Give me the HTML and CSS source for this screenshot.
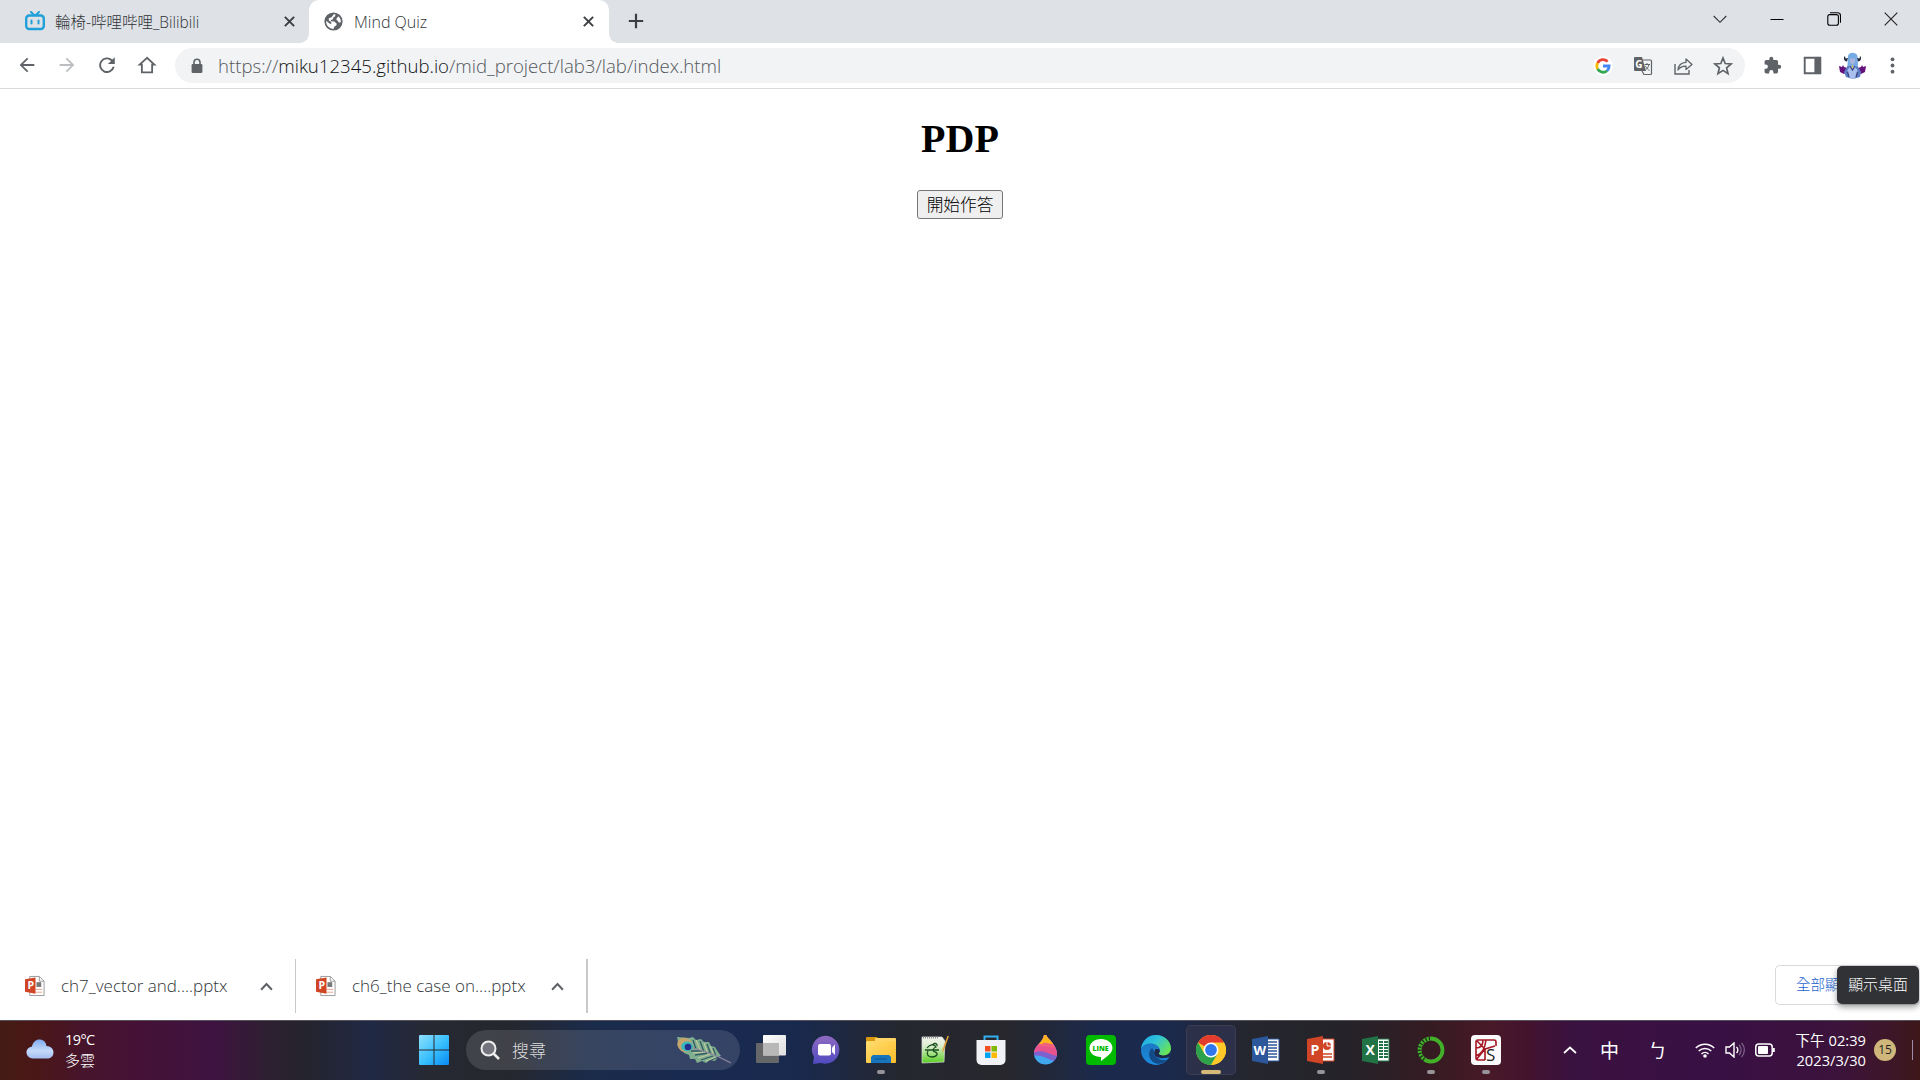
FILE: index.html
```html
<!DOCTYPE html>
<html lang="zh-Hant">
<head>
<meta charset="utf-8">
<title>Mind Quiz</title>
<link rel="stylesheet" href="styles.css">
</head>
<body>
<div class="screen">
  <header class="tabstrip">
    <div class="tab tab-first">
      <svg class="favicon" viewBox="0 0 20 20"><path d="M6 1l3 3M14 1l-3 3" stroke="#20a0d8" stroke-width="2" stroke-linecap="round"/><rect x="1.2" y="4.5" width="17.6" height="13.5" rx="3" fill="#dee1e6" stroke="#20a0d8" stroke-width="2.4"/><path d="M6.5 9.5v3M13.5 9.5v3" stroke="#20a0d8" stroke-width="2" stroke-linecap="round"/></svg>
      <span class="tab-title t-bili">輪椅-哔哩哔哩_Bilibili</span>
      <svg class="close" viewBox="0 0 10 10"><path d="M.8.8l8.4 8.4M9.2.8L.8 9.2" stroke="#3c4043" stroke-width="1.8"/></svg>
    </div>
    <div class="tab tab-active">
      <svg class="favicon globe" viewBox="0 0 20 20"><circle cx="10" cy="10" r="9.6" fill="#5f6368"/><path d="M10.500 2.200l1.500.3-.2 2-2 1.200-.4 1.800-2.200.8.200 1.500 3.500.2 2.500 2.300-.5 2-2.200 1.200-.7 2.500A8 8 0 0 1 2.200 9.300l4.300 3.400 1.300-.7-.3-1.700-2.300-1.100L5 6.500 8 5.400z" fill="#fff"/><path d="M15.300 4.600a8 8 0 0 1 2.500 6l-1.900.8-1.500-2.300-1.400-.9.500-1.800z" fill="#fff"/></svg>
      <span class="tab-title t-quiz">Mind Quiz</span>
      <svg class="close" viewBox="0 0 10 10"><path d="M.8.8l8.4 8.4M9.2.8L.8 9.2" stroke="#3c4043" stroke-width="1.8"/></svg>
    </div>
    <svg class="newtab" viewBox="0 0 16 16"><path d="M8 .8v14.4M.8 8h14.4" stroke="#3c4043" stroke-width="2.2"/></svg>
    <div class="window-controls">
      <svg viewBox="0 0 14 14"><path d="M.7 4L7 10.3 13.3 4" fill="none" stroke="#333" stroke-width="1.1"/></svg>
      <svg viewBox="0 0 14 14"><path d="M.5 7.500h13" stroke="#000"/></svg>
      <svg viewBox="0 0 14 14"><rect x=".8" y="2.6" width="10.6" height="10.6" rx="2" fill="none" stroke="#000" stroke-width="1.1"/><path d="M3 .7h7.5a3 3 0 0 1 3 3v7" fill="none" stroke="#000" stroke-width="1.1"/></svg>
      <svg viewBox="0 0 14 14"><path d="M.7.7l12.6 12.6M13.3.7L.7 13.3" stroke="#222" stroke-width="1.1"/></svg>
    </div>
  </header>

  <nav class="toolbar">
    <div class="nav-buttons">
      <svg viewBox="0 0 24 24"><path d="M20 11H7.8l5.6-5.6L12 4l-8 8 8 8 1.4-1.4L7.8 13H20z" fill="#5f6368"/></svg>
      <svg viewBox="0 0 24 24"><path d="M4 11h12.2l-5.6-5.6L12 4l8 8-8 8-1.4-1.4 5.6-5.6H4z" fill="#bcbec1"/></svg>
      <svg viewBox="0 0 24 24"><path d="M17.900 6.100A8.500 8.500 0 1 0 20.300 14h-2.200A6.400 6.400 0 1 1 16.400 7.600L13 11h7.500V3.500z" fill="#5f6368"/></svg>
      <svg viewBox="0 0 24 24"><path d="M12 4.200L4 11.600h2.400V20h11.200v-8.400H20z" fill="none" stroke="#5f6368" stroke-width="2"/></svg>
    </div>
    <div class="omnibox">
      <svg class="lock" viewBox="0 0 12 16"><path d="M3 7V4.3a3 3 0 0 1 6 0V7" fill="none" stroke="#5f6368" stroke-width="1.6"/><rect x=".6" y="6" width="10.8" height="9" rx="1.2" fill="#5f6368"/></svg>
      <span class="url">https://<b>miku12345.github.io</b>/mid_project/lab3/lab/index.html</span>
      <div class="box-icons">
        <svg viewBox="0 0 20 20"><circle cx="10" cy="10" r="9.800" fill="#fff"/><g fill="none" stroke-width="2.800"><path d="M14.600 5.600A6.200 6.200 0 0 0 4.600 7" stroke="#ea4335"/><path d="M4.600 7a6.200 6.200 0 0 0 0 6" stroke="#fbbc05"/><path d="M4.600 13a6.200 6.200 0 0 0 9.500 1.700" stroke="#34a853"/><path d="M14.100 14.700A6 6 0 0 0 16.100 10H10" stroke="#4285f4"/></g></svg>
        <svg viewBox="0 0 20 20"><path d="M8 4h9.500a1 1 0 0 1 1 1v12.500a1 1 0 0 1-1 1H11l-2-3.500" fill="#f1f3f4" stroke="#5f6368" stroke-width="1.200"/><path d="M2 1h7l4 14H2a1 1 0 0 1-1-1V2a1 1 0 0 1 1-1z" fill="#5f6368"/><text x="2.300" y="11.500" class="glyph-g">G</text><path d="M11.500 8.500H17M14 7v1.500M16 8.500c-.5 2.500-2 4.500-3.500 5.500M12.500 10c1 2 2.500 3.500 4 4.500" stroke="#5f6368" fill="none"/></svg>
        <svg viewBox="0 0 20 20"><path d="M2 8v10h14v-4" fill="none" stroke="#5f6368" stroke-width="1.400"/><path d="M5 14c.4-5 3-7.500 8-7.700V3l6 5.400-6 5.100v-3.300c-3.600-.1-6 .9-8 3.800z" fill="none" stroke="#5f6368" stroke-width="1.300" stroke-linejoin="round"/></svg>
        <svg viewBox="0 0 20 20"><path d="M10 2l2.200 5.500 6 .5-4.600 3.800L15 17.600 10 14.400 5 17.600l1.400-5.800L1.800 8l6-.5z" fill="none" stroke="#5f6368" stroke-width="1.700"/></svg>
      </div>
    </div>
    <div class="chrome-icons">
      <svg viewBox="0 0 24 24"><path d="M20.500 11H19V7a2 2 0 0 0-2-2h-4V3.500a2.500 2.500 0 0 0-5 0V5H4a2 2 0 0 0-2 2v3.800h1.500a2.700 2.700 0 0 1 0 5.400H2V20a2 2 0 0 0 2 2h3.800v-1.500a2.700 2.700 0 0 1 5.400 0V22H17a2 2 0 0 0 2-2v-4h1.500a2.500 2.500 0 0 0 0-5z" fill="#5f6368"/></svg>
      <svg viewBox="0 0 20 20"><path d="M1.800 1.800h16.400v16.400H1.800z" fill="#fff" stroke="#5f6368" stroke-width="2"/><path d="M12 1h7v18h-7z" fill="#5f6368"/></svg>
      <svg class="avatar" viewBox="0 0 27 27"><path d="M0 14l3 1 1-2 1 2 3 1 1 3-4 3-4-2zM27 14l-3 1-1-2-1 2-3 1-1 3 4 3 4-2z" fill="#65117c"/><path d="M9.500 12L5 20l2 5 5 1.500h4L21 25l1-5-4.500-8z" fill="#5c7cc4"/><path d="M13.500 12l-5 6 1 7 4 1.500 4-1.500 1-7z" fill="#a8bff0"/><path d="M9 4C10-.3 17-.3 18.500 4L19 13l-2 2H10.500L8.500 13z" fill="#75aae5"/><path d="M11 6.500h5v4L13.500 12.500 11 10.500z" fill="#a9b5dc"/><path d="M8 9.500C4 9 4.500 5 6 4l.5 2.500L9 6zM19 9.500c4-.5 3.500-4.500 2-5.500l-.5 2.500L18 6z" fill="#252a44"/><path d="M11 14l2.500 4 2.500-4M8.500 20l1.500 5M18.500 20L17 25" fill="none" stroke="#35407d" stroke-width="1.200"/><path d="M13.500 13v3" stroke="#d9b96a" stroke-width="1.500"/></svg>
      <svg viewBox="0 0 20 20"><g fill="#5f6368"><circle cx="10" cy="3.500" r="2"/><circle cx="10" cy="10" r="2"/><circle cx="10" cy="16.500" r="2"/></g></svg>
    </div>
  </nav>

  <main class="page">
    <h1>PDP</h1>
    <button class="start">開始作答</button>
  </main>

  <section class="downloads">
    <div class="download">
      <svg class="ppt-file" viewBox="0 0 22 22"><path d="M5 1h10l5 5v15H5z" fill="#fff" stroke="#999"/><path d="M15 1v5h5" fill="none" stroke="#999"/><path d="M12 7h5v5h-5z" fill="#777"/><path d="M11 14.500h7M11 17.500h7" stroke="#e5a58f"/><path d="M0 4l11-2v17L0 17z" fill="#d04525"/><text x="2.500" y="14" class="office-small">P</text></svg>
      <span class="file-a">ch7_vector and....pptx</span>
      <svg class="caret" viewBox="0 0 12 8"><path d="M1 7l5-5.300L11 7" fill="none" stroke="#5f6368" stroke-width="1.900"/></svg>
    </div>
    <div class="download last">
      <svg class="ppt-file" viewBox="0 0 22 22"><path d="M5 1h10l5 5v15H5z" fill="#fff" stroke="#999"/><path d="M15 1v5h5" fill="none" stroke="#999"/><path d="M12 7h5v5h-5z" fill="#777"/><path d="M11 14.500h7M11 17.500h7" stroke="#e5a58f"/><path d="M0 4l11-2v17L0 17z" fill="#d04525"/><text x="2.500" y="14" class="office-small">P</text></svg>
      <span class="file-b">ch6_the case on....pptx</span>
      <svg class="caret" viewBox="0 0 12 8"><path d="M1 7l5-5.300L11 7" fill="none" stroke="#5f6368" stroke-width="1.900"/></svg>
    </div>
    <div class="show-all">全部顯<div class="tooltip">顯示桌面</div></div>
  </section>

  <footer class="taskbar">
    <div class="weather">
      <svg viewBox="0 0 28 20"><defs><linearGradient id="cloud" x2="0" y2="1"><stop stop-color="#7eaaf0"/><stop offset=".6" stop-color="#c5dafb"/><stop offset="1" stop-color="#a2bdf0"/></linearGradient></defs><path d="M7 19.500a6 6 0 0 1-1-12C7 2 11 0 14 .5c4 .3 6 3 6.500 6.500C25 7 27.500 10 27.500 13.500c0 3.500-2.500 6-6 6z" fill="url(#cloud)"/></svg>
      <div><span class="temp">19°C</span><span>多雲</span></div>
    </div>
    <div class="apps">
      <div class="app start-menu"><svg viewBox="0 0 30 30"><defs><linearGradient id="win" x2="1" y2="1"><stop stop-color="#8fe1ff"/><stop offset=".55" stop-color="#35bdfc"/><stop offset="1" stop-color="#078af5"/></linearGradient></defs><path d="M0 1a1 1 0 0 1 1-1h13.500v14.500H0zM15.500 0H29a1 1 0 0 1 1 1v13.500H15.500zM0 15.500h14.500V30H1a1 1 0 0 1-1-1zM15.500 15.500H30V29a1 1 0 0 1-1 1H15.500z" fill="url(#win)"/></svg></div>
      <div class="search">
        <svg class="lens" viewBox="0 0 20 20"><circle cx="8.500" cy="8.500" r="7" fill="#73747e" stroke="#eee" stroke-width="2"/><path d="M13.500 13.500l5.500 5.500" stroke="#eee" stroke-width="2.500"/></svg>
        <span>搜尋</span>
        <svg class="feather" viewBox="0 0 56 28">
          <path d="M1 1l12 1 4-1 3 3 5-1 3 3 5 0 2 4 4 1 3 5 3 4-3 1-3 4-5-1-4 3-4-2-5 2-2-4-5 0-1-4-5-2-1-4-4-2z" fill="#7fae8f"/>
          <path d="M17 4l3 9M24 5l4 11M31 8l4 11M37 12l3 8M15 15l11 0M19 19l14-2M25 24l12-4M33 25l9-4" stroke="#345a66" stroke-width="1.300"/>
          <path d="M20 4l4 10M28 7l4 11M34 10l4 9M17 17l12-1M22 22l13-4M30 25l10-4" stroke="#d0cfa0" stroke-width=".9"/>
          <path d="M14 11c10 3 20 6 29 10l12 6" stroke="#8e87a2" stroke-width="1.300" fill="none"/>
          <ellipse cx="9" cy="9" rx="8" ry="7" transform="rotate(35 9 9)" fill="#c6a46d"/><ellipse cx="11" cy="10.500" rx="5.800" ry="5" fill="#38b7bd"/><circle cx="12" cy="11" r="3.300" fill="#242d8c"/>
        </svg>
      </div>
      <div class="app"><svg viewBox="0 0 30 30"><defs><linearGradient id="pane" x2="1" y2="1"><stop stop-color="#fff"/><stop offset="1" stop-color="#ddd"/></linearGradient></defs><rect y="8" width="23" height="20" rx="1" fill="#666768"/><rect x="7" width="23" height="20.500" rx="1" fill="url(#pane)"/><path d="M7 8h16v12.500H7z" fill="#b8b8b8"/></svg></div>
      <div class="app"><svg viewBox="0 0 30 30"><defs><linearGradient id="chat" x2="0" y2="1"><stop stop-color="#8f6ac1"/><stop offset="1" stop-color="#504bc0"/></linearGradient></defs><path d="M15 .7A14 14 0 1 1 10 28L2 29l1-7A14 14 0 0 1 15 .7z" fill="url(#chat)"/><rect x="7" y="9" width="13" height="11.500" rx="2" fill="#fff"/><path d="M21 12.500l3-3v10.500l-3-3z" fill="#fff"/></svg></div>
      <div class="app open"><svg viewBox="0 0 30 30"><defs><linearGradient id="folder" x2="1" y2="1"><stop stop-color="#ffdd70"/><stop offset="1" stop-color="#ffbd28"/></linearGradient></defs><path d="M0 3a1 1 0 0 1 1-1h10l3 4H0z" fill="#d99710"/><rect y="3" x="9" width="21" height="10" rx="1" fill="#ffd666"/><rect y="6" width="30" height="22" rx="1" fill="url(#folder)"/><path d="M5 28v-6l2-2h16l2 2v6z" fill="#1675bd"/><path d="M9 24h12" stroke="#0e558b"/></svg></div>
      <div class="app"><svg viewBox="0 0 30 30"><defs><linearGradient id="note" x2="0" y2="1"><stop stop-color="#f2f3ee"/><stop offset=".35" stop-color="#dceccf"/><stop offset="1" stop-color="#58cf22"/></linearGradient></defs><path d="M1 2h20l3 4-1 21-22 1z" fill="url(#note)" stroke="#ddd" stroke-width=".7"/><path d="M6 13c2-3 7-5 9-1-3 1-4 4-1 5 4 1 2 5-3 5-4 0-6-3-4-6M4 15h14M12 10a2 2 0 1 1 4 1" stroke="#174f1c" stroke-width="1.300" fill="none"/><path d="M2 2.500h15" stroke="#8e8e8e" stroke-width="2" stroke-dasharray="1 1"/><path d="M28 1l-5 14-2 3 .5-3.500L26.500.8z" fill="#dfa035"/></svg></div>
      <div class="app"><svg viewBox="0 0 30 30"><path d="M8.500 6V1.500h13V6" fill="none" stroke="#33b0f0" stroke-width="2"/><path d="M.5 5h29v20a5 5 0 0 1-5 5h-19a5 5 0 0 1-5-5z" fill="#f0f2f6"/><path d="M9 11h5.500v5.500H9z" fill="#f25022"/><path d="M15.500 11H21v5.500h-5.500z" fill="#7fba00"/><path d="M9 17.500h5.500V23H9z" fill="#00a4ef"/><path d="M15.500 17.500H21V23h-5.500z" fill="#ffb900"/></svg></div>
      <div class="app"><svg viewBox="0 0 30 30"><defs><clipPath id="drop"><path d="M15 0c3 5 11 11 11 18.500a11.500 11 0 0 1-23 0C3 10 12 8 13 0z"/></clipPath></defs><g clip-path="url(#drop)"><path fill="#41a8ef" d="M0 0h30v30H0z"/><path d="M0 0h30v25c-7 6-15-7-30-4z" fill="#7d61ce"/><path d="M0 0h30v20C20 24 16 12 2 18z" fill="#e9538d"/><path d="M0 0h30v12C23 15 15 9 8 12z" fill="#f0627c"/><path d="M8 9L13 0h4l6 9c-4 1-8-3-12 0z" fill="#ffb51c"/></g></svg></div>
      <div class="app"><svg viewBox="0 0 30 30"><rect width="30" height="30" rx="4" fill="#00b900"/><path d="M15 4c6.500 0 11.500 4 11.500 9 0 6-8.500 10.500-11.500 13v-4C8 22 3.500 18 3.500 13S8.500 4 15 4z" fill="#fff"/><text x="6.500" y="16" class="line-logo">LINE</text></svg></div>
      <div class="app"><svg viewBox="0 0 30 30"><defs><linearGradient id="edge" y2=".6"><stop stop-color="#1ba5e8"/><stop offset=".5" stop-color="#2fc4d8"/><stop offset="1" stop-color="#68e257"/></linearGradient><linearGradient id="wave" x2="0" y2="1"><stop stop-color="#1c6fb8"/><stop offset="1" stop-color="#1b8ce0"/></linearGradient></defs><circle cx="15" cy="15" r="15" fill="url(#wave)"/><path d="M11 13c-4 3-4 10 1 14 5 3.500 12 1.500 15.500-3C22 27 15 24 14.500 18z" fill="#124b88"/><path d="M14.500 14c-3 5 1 12 14 8l1.500-4v-5L20 17c-1.500 0-1-2-2-3z" fill="#1c294a"/><path d="M0 14C1 6 7 0 15 0c9 0 15 6.500 15 13.500 0 7-9 8.500-12 5.500-.7-1 1.500-1.500 1-4C18.300 8 4 5.500 0 14z" fill="url(#edge)"/></svg></div>
      <div class="app current"><svg viewBox="0 0 30 30"><circle cx="15" cy="15" r="15" fill="#ffc928"/><path d="M15 15L2 7.500A15 15 0 0 1 28 7.500z" fill="#e33b2e"/><path d="M2 7.500A15 15 0 0 0 15 30l6.500-11H8.500z" fill="#2da24c"/><path d="M15 7.500h13A15 15 0 0 1 15 30l6.500-11z" fill="#ffc928"/><circle cx="15" cy="15" r="7.500" fill="#fff"/><circle cx="15" cy="15" r="5.900" fill="#3077ee"/></svg></div>
      <div class="app"><svg viewBox="0 0 30 30"><path d="M14 4h14v22H14z" fill="#fff" stroke="#2c579a"/><path d="M16 7h10M16 10h10M16 13h10M16 16h10M16 19h10M16 22h10" stroke="#2c579a" stroke-width="1.500"/><path d="M1 4l16-3v28L1 26z" fill="#2c579a"/><text x="2.500" y="20" class="office w">W</text></svg></div>
      <div class="app open"><svg viewBox="0 0 30 30"><path d="M14 4h14v22H14z" fill="#fff" stroke="#d04526"/><circle cx="21" cy="11" r="4" fill="#d04526"/><path d="M21 11V6M21 11h5" stroke="#fff"/><path d="M17 19h9M17 22h9" stroke="#d04526" stroke-width="1.500"/><path d="M1 4l16-3v28L1 26z" fill="#d04526"/><text x="4.500" y="20" class="office">P</text></svg></div>
      <div class="app"><svg viewBox="0 0 30 30"><path d="M14 4h14v22H14z" fill="#fff" stroke="#217346"/><path d="M18 7h9M18 10h9M18 13h9M18 16h9M18 19h9M18 22h9" stroke="#217346" stroke-width="1.800" stroke-dasharray="4 1"/><path d="M1 4l16-3v28L1 26z" fill="#217346"/><text x="4.500" y="20" class="office">X</text></svg></div>
      <div class="app open"><svg viewBox="0 0 30 30"><circle cx="15" cy="15" r="11.500" fill="none" stroke="#43b02a" stroke-width="3.800"/><path d="M14 3.500A11.500 11.500 0 0 0 9 25" fill="none" stroke="#1d2b20" stroke-width="4" stroke-dasharray="1.200 2.200"/></svg></div>
      <div class="app open"><svg viewBox="0 0 30 30"><rect width="30" height="30" rx="4" fill="#fafafa"/><path d="M14 25H7a2 2 0 0 1-2-2V7a2 2 0 0 1 2-2h16a2 2 0 0 1 2 2v4M5 13c5 0 7-3 7-8M5 21c6-2 9-7 10-16M5 5l9 9v11M14 14L5 25M14 14l10-3" fill="none" stroke="#a61624" stroke-width="1.600"/><text x="15" y="25.500" class="spyder">S</text></svg></div>
    </div>
    <div class="tray">
      <svg class="up" viewBox="0 0 14 8"><path d="M1 7l6-5.500L13 7" fill="none" stroke="#fff" stroke-width="1.700"/></svg>
      <span class="ime">中</span><span class="ime bopo">ㄅ</span>
      <svg class="wifi" viewBox="0 0 20 16"><g fill="none" stroke="#fff" stroke-width="1.500"><path d="M.8 6a13 13 0 0 1 18.400 0M3.700 9a9 9 0 0 1 12.600 0M6.500 12a5 5 0 0 1 7 0"/></g><circle cx="10" cy="14" r="1.800" fill="#fff"/></svg>
      <svg class="volume" viewBox="0 0 20 16"><path d="M1 5h3.500l4.500-4v14l-4.500-4H1z" fill="none" stroke="#fff" stroke-width="1.400"/><path d="M11.500 5a4 4 0 0 1 0 6" fill="none" stroke="#fff" stroke-width="1.400"/><path d="M14 3a7 7 0 0 1 0 10M16.500 1a10 10 0 0 1 0 14" fill="none" stroke="#81678b" stroke-width="1.200"/></svg>
      <svg class="battery" viewBox="0 0 20 14"><rect x=".8" y="1" width="16.400" height="12" rx="3" fill="none" stroke="#fff" stroke-width="1.500"/><rect x="3" y="3" width="10" height="8" rx="1" fill="#fff"/><path d="M18.800 5v4" stroke="#fff" stroke-width="2"/></svg>
      <div class="clock"><span>下午 02:39</span><span>2023/3/30</span></div>
      <span class="badge">15</span>
      <i class="desktop-edge"></i>
    </div>
  </footer>
</div>
</body>
</html>
```
FILE: styles.css
```css
* { box-sizing: border-box; }
body { margin: 0; overflow: hidden; }
svg { display: block; flex: none; }
.screen {
  width: 1920px; height: 1080px; display: flex; flex-direction: column;
  background: #fff; color: #303438;
  font-family: "Open Sans", "Noto Sans CJK TC", sans-serif; font-weight: 300;
}
span, .show-all { white-space: nowrap; }

.tabstrip { height: 43px; background: #dee1e6; display: flex; align-items: center; flex: none; }
.tab { display: flex; align-items: center; height: 43px; }
.tab-first { width: 309px; padding: 0 14px 0 24px; background: #dee1e6; }
.tab-active { width: 300px; padding: 0 15px 0 15px; background: #fff; border-radius: 10px 10px 0 0; position: relative; }
.tab-active::before, .tab-active::after { content: ""; position: absolute; bottom: 0; width: 9px; height: 9px; }
.tab-active::before { left: -9px; background: radial-gradient(circle at 0 0, #dee1e6 8.500px, #fff 9px); }
.tab-active::after { right: -9px; background: radial-gradient(circle at 100% 0, #dee1e6 8.500px, #fff 9px); }
.favicon { width: 22px; height: 20px; margin-top: -1px; }
.globe { width: 19px; height: 19px; }
.tab-title { flex: 1; line-height: 20px; margin-top: 1px; }
.t-bili { margin-left: 9px; font-size: 15.500px; }
.t-quiz { margin-left: 11px; font-size: 16px; }
.close { width: 11px; height: 11px; }
.newtab { width: 16px; height: 16px; margin: -1px 0 0 19px; }
.window-controls { margin-left: auto; display: flex; gap: 43px; padding: 0 22px 6px 0; }
.window-controls svg { width: 14px; height: 14px; }

.toolbar { height: 46px; flex: none; border-bottom: 1px solid #d9dadc; display: flex; align-items: center; padding-bottom: 1px; }
.nav-buttons { display: flex; gap: 18px; padding-left: 16px; width: 175px; }
.nav-buttons svg { width: 22px; height: 22px; }
.omnibox { width: 1570px; height: 35px; background: #f1f3f4; border-radius: 18px; display: flex; align-items: center; padding-left: 16px; }
.lock { width: 12px; height: 16px; margin-top: 1px; }
.url { margin-left: 15px; font-size: 18.600px; color: #53575c; }
.url b { font-weight: 300; color: #101214; }
.box-icons { display: flex; gap: 20px; margin-left: auto; padding-right: 12px; padding-top: 1px; }
.box-icons svg { width: 20px; height: 20px; }
.glyph-g { font: 700 10px "Open Sans", sans-serif; fill: #fff; }
.chrome-icons { display: flex; align-items: center; margin-left: 18px; gap: 21px; }
.chrome-icons svg { width: 19px; height: 19px; }
.chrome-icons .avatar { width: 27px; height: 27px; margin: 0 -4px; }

.page { flex: 1; display: flex; flex-direction: column; align-items: center; color: #000; }
h1 { font: 700 40px/46px "Liberation Serif", serif; margin: 27px 0 28px; }
.start {
  width: 86px; height: 29px; padding: 0; border: 1px solid #767676; border-radius: 3px; background: #efefef;
  color: #000; font: 300 16.700px/27px "Noto Sans CJK TC", sans-serif;
}

.downloads { height: 61px; flex: none; display: flex; align-items: flex-start; font-size: 17px; }
.download { width: 296px; height: 54px; border-right: 1px solid #c8c9ca; display: flex; align-items: center; padding: 0 22px 0 25px; }
.download.last { width: 292px; padding-left: 20px; border-right: 2px solid #c8c9ca; }
.ppt-file { width: 21px; height: 22px; }
.download span { margin-left: 15px; margin-top: -2px; flex: 1; }
.caret { width: 13px; height: 9px; }
.office-small { font: 700 11px "Open Sans", sans-serif; fill: #fff; }
.show-all {
  position: relative; margin: 6px 0 0 auto; width: 145px; height: 40px; border: 1px solid #d8dadd; border-right: 0;
  border-radius: 5px; color: #1a62d0; font-size: 14.500px; line-height: 38px; padding-left: 20px;
}
.tooltip {
  position: absolute; left: 61px; top: 0; width: 82px; height: 38px; border-radius: 5px; background: #303236;
  color: #fff; text-align: center; font-size: 14.900px; line-height: 37px; box-shadow: 0 3px 6px #0006;
}

.taskbar {
  position: relative; height: 60px; flex: none; border-top: 1px solid #53505a; color: #fff;
  display: flex; align-items: center; padding-bottom: 2px;
  background: linear-gradient(90deg, #431c14 0, #4a1717 35px, #46142c 85px, #451236 140px, #3e1341 215px, #2d2030 270px, #24242e 310px, #202945 370px, #272933 430px, #25272e 510px, #1b2b4a 590px, #192a51 690px, #19294d 800px, #25272f 900px, #27272d 1010px, #1b294c 1100px, #1b294c 1170px, #25262e 1250px, #252329 1350px, #351b22 1430px, #481927 1490px, #43132f 1530px, #3a1240 1570px, #391044 1720px, #3c133b 1840px, #3d1728 1890px, #3d1719 1920px);
}
.weather { width: 409px; padding-left: 25px; display: flex; align-items: center; gap: 10px; }
.weather > svg { width: 30px; height: 20px; margin-top: -2px; }
.weather span { display: block; font-size: 14.500px; line-height: 20px; font-weight: 400; }
.weather div span:last-child { font-size: 15px; font-weight: 300; }
.weather .temp { letter-spacing: -.6px; }
.apps { display: flex; align-items: center; }
.app { width: 50px; height: 50px; margin-right: 5px; display: flex; flex-direction: column; align-items: center; padding-top: 10px; border-radius: 5px; }
.app svg { width: 30px; height: 30px; }
.open::after { content: ""; width: 8px; height: 4px; border-radius: 2px; background: #96939b; margin-top: 5px; }
.current { background: #2d3049; box-shadow: inset 0 0 0 1px #3b3d51; }
.current::after { content: ""; width: 20px; height: 4px; border-radius: 2px; background: #d4b979; margin-top: 5px; }
.search { width: 274px; height: 40px; border-radius: 20px; background: #ffffff20; display: flex; align-items: center; padding: 0 8px 0 14px; margin: 0 6px 0 2px; font-size: 17px; }
.search span { margin-left: 12px; color: #ddd; }
.lens { width: 20px; height: 20px; }
.feather { width: 56px; height: 28px; margin-left: auto; }
.office { font: 700 14px "Open Sans", sans-serif; fill: #fff; }
.office.w { font-size: 13px; }
.line-logo { font: 800 7px "Open Sans", sans-serif; fill: #00b900; }
.spyder { font: 500 17px "Open Sans", sans-serif; fill: #222; }
.tray { position: absolute; right: 0; top: 0; height: 57px; display: flex; align-items: center; width: 357px; }
.up { width: 14px; height: 8px; }
.ime { font-size: 19px; margin-left: 23px; font-weight: 400; width: 20px; }
.bopo { margin-left: 28px; }
.wifi { width: 20px; height: 16px; margin-left: 27px; }
.volume { width: 20px; height: 16px; margin-left: 10px; }
.battery { width: 20px; height: 14px; margin-left: 10px; }
.clock { width: 71px; margin-left: 20px; display: flex; flex-direction: column; align-items: flex-end; font-size: 14.700px; line-height: 20px; font-weight: 400; }
.badge { width: 22px; height: 22px; margin-left: 8px; border-radius: 50%; background: #cfb67a; color: #241e25; text-align: center; font-size: 12px; line-height: 22px; font-weight: 400; }
.desktop-edge { width: 1px; height: 20px; background: #a28ba3; margin-left: 16px; }
```
